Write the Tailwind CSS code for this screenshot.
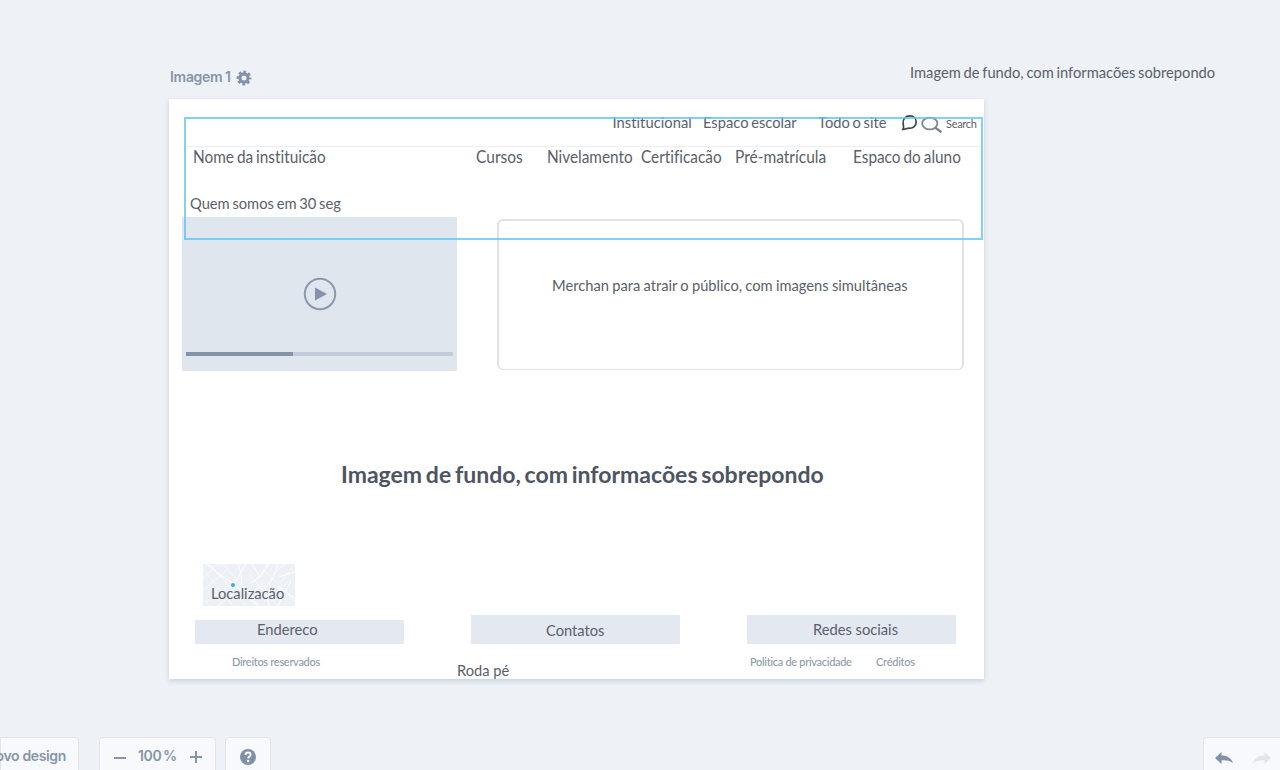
<!DOCTYPE html>
<html lang="pt-BR">
<head>
<meta charset="utf-8">
<title>Imagem 1</title>
<script src="https://cdn.jsdelivr.net/npm/@tailwindcss/browser@4"></script>
</head>
<body class="h-screen overflow-hidden bg-[#eef1f6] font-[Lato,sans-serif] text-[14.700px] leading-5 text-[#5a616a] [font-variant-ligatures:no-common-ligatures]">
<div class="relative flex h-[770px] w-[1280px] flex-col overflow-hidden [word-spacing:-1px]">
  <header class="flex h-[99px] shrink-0 items-start justify-between pt-[62px] pr-[64px] pl-[170px]">
    <h1 class="mt-[5px] flex items-center gap-[5px] font-[Inter,sans-serif] text-[14px] font-semibold tracking-[-0.3px] text-[#8795aa] [word-spacing:-0.5px]">Imagem 1
      <svg class="mt-px size-4" viewBox="-8 -8 16 16" fill="none" stroke="#8392a8"><circle r="4.1" stroke-width="3.2"/><circle r="6.2" stroke-width="2.4" stroke-dasharray="2.7 2.169" stroke-dashoffset="1.35"/></svg>
    </h1>
    <p class="w-[306px] whitespace-nowrap">Imagem de fundo, com informacões sobrepondo</p>
  </header>

  <!-- Artboard: freely placed wireframe elements -->
  <main class="relative ml-[169px] h-[580px] w-[815px] shrink-0 bg-white whitespace-nowrap shadow-[0_2px_5px_#c7d0dc]">
    <div class="absolute top-[47px] left-[16px] h-px w-[798px] bg-[#edf0f5]"></div>
    <span class="absolute top-[13px] left-[443.500px] tracking-[0.05px]">Institucional</span>
    <span class="absolute top-[13px] left-[534px]">Espaco escolar</span>
    <span class="absolute top-[13px] left-[649px]">Todo o site</span>
    <svg class="absolute top-[15px] left-[732px] h-[18px] w-[18px]" viewBox="0 0 18 18" fill="none" stroke="#3f444a" stroke-width="1.7"><path d="M2 15.300C3.300 13.500 2.400 12 2.100 9.700C1.600 5 4.500 1.800 9 1.800C13 1.800 15.200 4.800 15.200 8C15.200 12 12 14.500 8.500 14.200C6 14 4.500 15.200 2 15.300Z"/></svg>
    <svg class="absolute top-[17px] left-[752px] h-[18px] w-[22px]" viewBox="0 0 22 18" fill="none" stroke="#7f8891"><ellipse cx="8.800" cy="7.500" rx="7.600" ry="5.900" stroke-width="1.800"/><path d="M14 11.500L20.500 16.300" stroke-width="2.500"/></svg>
    <span class="absolute top-[15px] left-[777px] text-[11px] tracking-[-0.3px]">Search</span>

    <span class="absolute top-[48px] left-[24px] origin-left scale-x-93 text-[16.500px]">Nome da instituicão</span>
    <span class="absolute top-[48px] left-[307px] origin-left scale-x-94 text-[16.500px]">Cursos</span>
    <span class="absolute top-[48px] left-[377.500px] origin-left scale-x-93 text-[16.500px]">Nivelamento</span>
    <span class="absolute top-[48px] left-[472px] origin-left scale-x-93 text-[16.500px]">Certificacão</span>
    <span class="absolute top-[48px] left-[566px] origin-left scale-x-94 text-[16.500px]">Pré-matrícula</span>
    <span class="absolute top-[48px] left-[684px] origin-left scale-x-93 text-[16.500px]">Espaco do aluno</span>
    <span class="absolute top-[94px] left-[21px]">Quem somos em 30 seg</span>

    <section class="absolute top-[118px] left-[13px] flex h-[154px] w-[275px] flex-col items-center bg-[#dfe6ee] px-1 pt-[60px]">
      <svg class="size-[34px]" viewBox="0 0 34 34"><circle cx="17" cy="17" r="15.200" fill="none" stroke="#8b99ad" stroke-width="2"/><path d="M12 10.500L24 17L12 23.500Z" fill="#8493a8"/></svg>
      <div class="mt-[41px] h-[4px] w-full bg-[#c2ccd9]"><div class="h-full w-[107px] bg-[#8593a8]"></div></div>
    </section>
    <section class="absolute top-[120px] left-[328px] h-[151px] w-[467px] rounded-md border-2 border-b border-[#dfe2ea] pt-[54px] pl-[53px] [word-spacing:-0.5px]">Merchan para atrair o público, com imagens simultâneas</section>

    <h2 class="absolute top-[359px] left-[172px] text-[23px] leading-8 font-bold text-[#4d5562] [word-spacing:-1.8px]">Imagem de fundo, com informacões sobrepondo</h2>

    <svg class="absolute top-[465px] left-[34px] h-[42px] w-[92px]" viewBox="0 0 92 42" fill="none" stroke="#fff"><path fill="#edf1f6" stroke="none" d="M0 0H92V42H0Z"/><path stroke-width="1.100" stroke-opacity=".8" d="M4 0Q17 12 31 20L55 42M31 20L43 0M35 0Q40 12 38 23M49 0L57 13L66 0M48 19Q60 12 65 0M75 0Q72 15 62 24L66 42M76 13L92 8M70 20L92 34M88 17L75 42"/><path stroke-width=".6" stroke-opacity=".9" d="M0 5L30 42M8 1L43 42M20 0L57 42M45 9L75 42M60 5L92 38M0 15L14 0M0 26L25 5M3 38L32 17M14 42L39 24M45 32L60 20M70 10L82 0M78 18L92 0M0 35L6 42M68 32L85 18"/></svg>
    <i class="absolute top-[484px] left-[62px] size-[4px] rounded-full bg-[#36acee]"></i>
    <span class="absolute top-[484px] left-[42px]">Localizacão</span>
    <section class="absolute top-[521px] left-[26px] h-[24px] w-[209px] bg-[#e4e8f1] pl-[62px] leading-[19px]">Endereco</section>
    <section class="absolute top-[516px] left-[302px] h-[29px] w-[209px] bg-[#e4e8f1] pl-[75px] leading-[30px]">Contatos</section>
    <section class="absolute top-[516px] left-[578px] h-[29px] w-[209px] bg-[#e4e8f1] pl-[66px] leading-[28px] [word-spacing:0px]">Redes sociais</section>
    <span class="absolute top-[553px] left-[63px] text-[11px] font-medium tracking-[-0.3px] text-[#8e9aaa] [word-spacing:0px]">Direitos reservados</span>
    <span class="absolute top-[561px] left-[288px] [word-spacing:0px]">Roda pé</span>
    <span class="absolute top-[553px] left-[581px] text-[11px] font-medium tracking-[-0.3px] text-[#8e9aaa] [word-spacing:0px]">Politica de privacidade</span>
    <span class="absolute top-[553px] left-[707px] text-[11px] font-medium tracking-[-0.25px] text-[#8e9aaa]">Créditos</span>
    <div class="absolute top-[18px] left-[15px] h-[123px] w-[799px] border-2 border-[#5fc5f4]/80"></div>
    <div class="absolute top-[16px] left-[440px] h-[2px] w-[280px] bg-white"></div>
  </main>

  <footer class="mt-[58px] flex h-[40px] shrink-0 font-[Inter,sans-serif] text-[14px] font-semibold tracking-[-0.35px] text-[#8795aa] [word-spacing:0px]">
    <div class="flex w-[79px] shrink-0 justify-end rounded-tr border border-[#e1e5eb] bg-[#f7f9fc] pt-[8px] pr-[12px] whitespace-nowrap">Novo design</div>
    <div class="ml-5 flex h-[40px] w-[117px] rounded-t border border-[#e1e5eb] bg-[#f7f9fc] pt-[8px] pl-[14px]">
      <svg class="mt-[5px] size-3" viewBox="0 0 12 12" stroke="#8795aa" stroke-width="2"><path d="M0 7H12"/></svg>
      <span class="ml-[12px] w-[40px] whitespace-nowrap [word-spacing:-1.5px]">100 %</span>
      <svg class="mt-[5px] ml-[12px] size-3" viewBox="0 0 12 12" stroke="#8795aa" stroke-width="2"><path d="M0 6H12M6 0V12"/></svg>
    </div>
    <div class="ml-[9px] h-[40px] w-[46px] rounded-t border border-[#e1e5eb] bg-[#f7f9fc] pt-[11px] pl-[14px]">
      <svg class="size-4" viewBox="0 0 16 16" fill="none"><circle cx="8" cy="8" r="8" fill="#8190a7"/><path d="M5.500 6C5.600 4.200 6.600 3.500 8 3.500C9.600 3.500 10.600 4.400 10.600 5.700C10.600 7.500 8.100 7.500 8.100 9.500" stroke="#f7f9fc" stroke-width="1.900"/><circle cx="8.100" cy="12" r="1.200" fill="#f7f9fc"/></svg>
    </div>
    <div class="ml-auto flex w-[77px] gap-[20px] rounded-tl border border-r-0 border-[#e1e5eb] bg-[#f7f9fc] pt-[14px] pl-[11px]">
      <svg class="h-[13px] w-[18px]" viewBox="0 0 18 13" fill="#8291a8"><path d="M0 6L6.500 0V3.500C12 3.500 16.500 6 18 11C14.500 8.300 11 8 6.500 8.300V12Z"/></svg>
      <svg class="h-[13px] w-[18px]" viewBox="0 0 18 13" fill="#e0e5ec"><path d="M18 6L11.500 0V3.500C6 3.500 1.500 6 0 11C3.500 8.300 7 8 11.500 8.300V12Z"/></svg>
    </div>
  </footer>
</div>
</body>
</html>
